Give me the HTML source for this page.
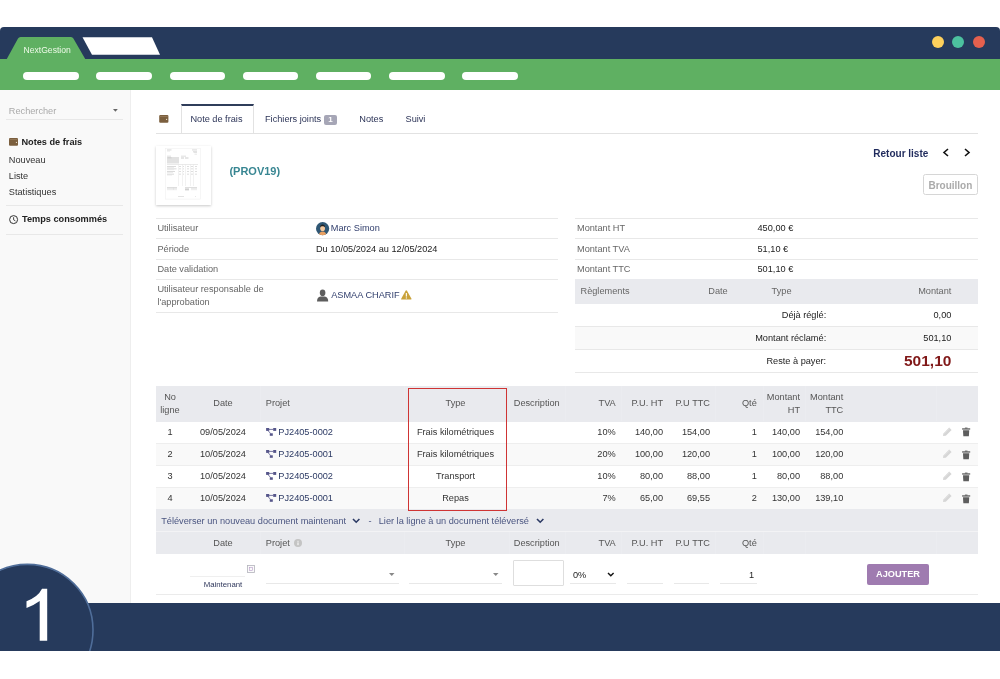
<!DOCTYPE html>
<html><head><meta charset="utf-8">
<style>
*{margin:0;padding:0;box-sizing:border-box}
html,body{width:1000px;height:679px;overflow:hidden;background:#fff}
body{font-family:"Liberation Sans",sans-serif;font-size:9.2px;color:#333;position:relative}
.a{position:absolute;white-space:nowrap;line-height:12px}
.hdr{position:absolute;left:0;top:27px;width:1000px;height:32px;background:#263a5c;border-radius:4px 4px 0 0}
.grn{position:absolute;left:0;top:58.5px;width:1000px;height:31.5px;background:#5fb062}
.pill{position:absolute;top:72px;height:8px;width:55.5px;background:#fff;border-radius:4px}
.dot{position:absolute;top:36.2px;width:12px;height:12px;border-radius:50%}
.side{position:absolute;left:0;top:90px;width:131px;height:513px;background:#f9f9f9;border-right:1px solid #eeeeee}
.ln{position:absolute;height:1px;background:#e8e8e8}
.lbl{color:#666}
.th{position:absolute;background:#e9eaee}
.foot{position:absolute;left:0;top:603px;width:1000px;height:48px;background:#263a5c}
</style></head><body><div style="position:absolute;left:0;top:0;width:1000px;height:679px;will-change:transform">
<!-- header -->
<div class="hdr"></div>
<svg class="a" style="left:0;top:0;line-height:0" width="200" height="60">
  <path d="M6.5 59.5 L18 38.5 Q18.8 37 20.5 37 L71 37 Q72.6 37 73.4 38.5 L85.5 59.5 Z" fill="#5fb062"/>
  <path d="M82.5 37.2 L152 37.2 L160 54.8 L92 54.8 Z" fill="#fff"/>
</svg>
<div class="a" style="left:23.5px;top:43.5px;font-size:8.6px;color:#eefae8">NextGestion</div>
<div class="grn"></div>
<div class="pill" style="left:23px"></div>
<div class="pill" style="left:96.2px"></div>
<div class="pill" style="left:169.5px"></div>
<div class="pill" style="left:242.7px"></div>
<div class="pill" style="left:315.9px"></div>
<div class="pill" style="left:389.2px"></div>
<div class="pill" style="left:462.4px"></div>
<div class="dot" style="left:932px;background:#fdd05c"></div>
<div class="dot" style="left:952.2px;background:#4cc19f"></div>
<div class="dot" style="left:973px;background:#e5604e"></div>

<!-- sidebar -->
<div class="side"></div>
<div class="a" style="left:8.8px;top:105px;color:#aaa">Rechercher</div>
<svg class="a" style="left:113.2px;top:109.2px;line-height:0" width="6" height="4"><path d="M0 0 L4.8 0 L2.4 2.8Z" fill="#666"/></svg>
<div class="ln" style="left:5.5px;top:119px;width:117px"></div>
<div class="a" style="left:21.4px;top:135.5px;font-weight:bold;color:#222">Notes de frais</div>
<div class="a" style="left:8.8px;top:153.5px;color:#333">Nouveau</div>
<div class="a" style="left:8.8px;top:169.7px;color:#333">Liste</div>
<div class="a" style="left:8.8px;top:186.3px;color:#333">Statistiques</div>
<div class="ln" style="left:5.5px;top:205px;width:117px"></div>
<div class="a" style="left:22px;top:213.2px;font-weight:bold;color:#222">Temps consommés</div>
<div class="ln" style="left:5.5px;top:234px;width:117px"></div>


<!-- tabs -->
<svg class="a" style="left:159px;top:115px;line-height:0" width="11" height="9"><rect x="0.2" y="0" width="9.2" height="7.8" rx="1.1" fill="#7b5f3e"/><rect x="0.8" y="1.4" width="8" height="0.6" fill="#a08466"/><circle cx="7.6" cy="4.4" r="0.6" fill="#e8dccb"/></svg>
<div class="a" style="left:181px;top:103.5px;width:73px;height:30px;background:#fff;border:1px solid #e2e2e2;border-top:2px solid #2f3d5a;border-bottom:none"></div>
<div class="ln" style="left:155.6px;top:133px;width:822px;background:#e2e2e2"></div>
<div class="a" style="left:190.4px;top:113px;color:#2d3558">Note de frais</div>
<div class="a" style="left:265px;top:113px;color:#2d3558">Fichiers joints</div>
<div class="a" style="left:324px;top:115px;width:13px;height:9.6px;background:#a6a6b6;border-radius:2px;color:#fff;font-size:8px;font-weight:bold;line-height:9.6px;text-align:center">1</div>
<div class="a" style="left:359.3px;top:113px;color:#2d3558">Notes</div>
<div class="a" style="left:405.5px;top:113px;color:#2d3558">Suivi</div>

<!-- thumbnail -->
<div class="a" style="left:156px;top:146px;width:55px;height:59px;background:#fff;box-shadow:0 0.5px 2.5px rgba(0,0,0,0.22)"></div>
<svg class="a" style="left:165.3px;top:148.2px;line-height:0" width="36" height="52">
 <rect x="0.3" y="0.3" width="35" height="50.8" fill="none" stroke="#f0f0f0" stroke-width="0.6"/>
 <rect x="2" y="1.6" width="4.5" height="0.7" fill="#c8c8c8"/><rect x="2" y="2.8" width="3" height="0.5" fill="#d8d8d8"/>
 <rect x="27" y="1.6" width="5" height="0.7" fill="#c8c8c8"/><rect x="28" y="3" width="4" height="0.6" fill="#d0d0d0"/><rect x="28.5" y="4.4" width="3.5" height="0.6" fill="#d0d0d0"/><rect x="29.5" y="5.8" width="2.5" height="0.6" fill="#d8d8d8"/>
 <rect x="2" y="7.8" width="4" height="0.6" fill="#c8c8c8"/>
 <rect x="2" y="9" width="12" height="6.5" fill="#e2e2e2"/><rect x="2.5" y="9.6" width="4" height="0.6" fill="#c0c0c0"/>
 <rect x="16" y="7.8" width="5" height="0.6" fill="#c8c8c8"/><rect x="16" y="9.6" width="3" height="0.8" fill="#c0c0c0"/><rect x="20" y="9.6" width="3.5" height="0.8" fill="#c0c0c0"/>
 <rect x="2" y="16.5" width="31" height="0.5" fill="#d4d4d4"/>
 <rect x="2" y="18" width="9" height="0.6" fill="#c4c4c4"/><rect x="2" y="19" width="7" height="0.5" fill="#dcdcdc"/>
 <rect x="2" y="20.6" width="9.5" height="0.6" fill="#c4c4c4"/><rect x="2" y="21.6" width="7" height="0.5" fill="#dcdcdc"/>
 <rect x="2" y="23.2" width="8" height="0.6" fill="#c4c4c4"/><rect x="2" y="24.2" width="6" height="0.5" fill="#dcdcdc"/>
 <rect x="2" y="25.8" width="7" height="0.6" fill="#c4c4c4"/><rect x="2" y="26.8" width="5" height="0.5" fill="#dcdcdc"/>
 <rect x="14" y="18" width="2" height="0.6" fill="#c8c8c8"/><rect x="18" y="18" width="1" height="0.6" fill="#c8c8c8"/><rect x="22" y="18" width="2" height="0.6" fill="#c8c8c8"/><rect x="26" y="18" width="2" height="0.6" fill="#c8c8c8"/><rect x="30" y="18" width="2" height="0.6" fill="#c8c8c8"/>
 <rect x="14" y="20.6" width="2" height="0.6" fill="#c8c8c8"/><rect x="18" y="20.6" width="1" height="0.6" fill="#c8c8c8"/><rect x="22" y="20.6" width="2" height="0.6" fill="#c8c8c8"/><rect x="26" y="20.6" width="2" height="0.6" fill="#c8c8c8"/><rect x="30" y="20.6" width="2" height="0.6" fill="#c8c8c8"/>
 <rect x="14" y="23.2" width="2" height="0.6" fill="#c8c8c8"/><rect x="18" y="23.2" width="1" height="0.6" fill="#c8c8c8"/><rect x="22" y="23.2" width="2" height="0.6" fill="#c8c8c8"/><rect x="26" y="23.2" width="2" height="0.6" fill="#c8c8c8"/><rect x="30" y="23.2" width="2" height="0.6" fill="#c8c8c8"/>
 <rect x="14" y="25.8" width="2" height="0.6" fill="#c8c8c8"/><rect x="18" y="25.8" width="1" height="0.6" fill="#c8c8c8"/><rect x="22" y="25.8" width="2" height="0.6" fill="#c8c8c8"/><rect x="26" y="25.8" width="2" height="0.6" fill="#c8c8c8"/><rect x="30" y="25.8" width="2" height="0.6" fill="#c8c8c8"/>
 <rect x="13.3" y="16.5" width="0.4" height="21.5" fill="#dedede"/><rect x="17.4" y="16.5" width="0.4" height="21.5" fill="#dedede"/><rect x="20.4" y="16.5" width="0.4" height="21.5" fill="#dedede"/><rect x="25.1" y="16.5" width="0.4" height="21.5" fill="#dedede"/><rect x="28.2" y="16.5" width="0.4" height="21.5" fill="#dedede"/>
 <rect x="2" y="39" width="10" height="0.6" fill="#c8c8c8"/><rect x="2" y="40.4" width="10" height="0.5" fill="#d4d4d4"/><rect x="2" y="41.6" width="10" height="0.5" fill="#d4d4d4"/><rect x="8" y="39" width="0.4" height="3" fill="#d8d8d8"/>
 <rect x="20" y="39" width="12" height="0.6" fill="#c8c8c8"/><rect x="20" y="40.4" width="4" height="2" fill="#d0d0d0"/><rect x="26" y="40.4" width="6" height="0.5" fill="#d4d4d4"/><rect x="26" y="41.6" width="6" height="0.5" fill="#d4d4d4"/>
 <rect x="13" y="48.3" width="6" height="0.6" fill="#d0d0d0"/><rect x="30" y="48.3" width="1" height="0.6" fill="#d8d8d8"/>
</svg>
<div class="a" style="left:229.4px;top:164.5px;font-size:11px;line-height:13px;font-weight:bold;color:#388692">(PROV19)</div>

<!-- Retour -->
<div class="a" style="left:873.3px;top:148px;font-size:10px;font-weight:bold;color:#1f2a5c">Retour liste</div>
<svg class="a" style="left:942px;top:147.8px;line-height:0" width="30" height="9"><path d="M6 1 L2 4.5 L6 8" fill="none" stroke="#111" stroke-width="1.6"/><path d="M23 1 L27 4.5 L23 8" fill="none" stroke="#111" stroke-width="1.6"/></svg>
<div class="a" style="left:923.2px;top:174.2px;width:54.4px;height:21.3px;border:1px solid #d6d6d6;border-radius:2.5px;color:#aaa;font-size:10px;font-weight:bold;line-height:21.5px;text-align:center">Brouillon</div>

<!-- left info -->
<div class="ln" style="left:156px;top:217.5px;width:402px"></div>
<div class="ln" style="left:156px;top:238px;width:402px"></div>
<div class="ln" style="left:156px;top:258.5px;width:402px"></div>
<div class="ln" style="left:156px;top:279px;width:402px"></div>
<div class="ln" style="left:156px;top:312px;width:402px"></div>
<div class="a lbl" style="left:157.4px;top:222.3px">Utilisateur</div>
<div class="a lbl" style="left:157.4px;top:242.8px">Période</div>
<div class="a lbl" style="left:157.4px;top:263.4px">Date validation</div>
<div class="a lbl" style="left:157.4px;top:283.4px">Utilisateur responsable de</div>
<div class="a lbl" style="left:157.4px;top:296px">l'approbation</div>
<svg class="a" style="left:315.6px;top:221.6px;line-height:0" width="14" height="14"><defs><clipPath id="cc"><circle cx="6.6" cy="6.6" r="6.6"/></clipPath></defs><circle cx="6.6" cy="6.6" r="6.6" fill="#2f5774"/><g clip-path="url(#cc)"><path d="M2.5 14 Q3 9.5 6.6 9.5 Q10.2 9.5 10.7 14Z" fill="#e8a062"/><ellipse cx="6.6" cy="6.2" rx="2.4" ry="2.9" fill="#f3c9a0"/><path d="M4 5.5 Q4.2 2.6 6.6 2.6 Q9 2.6 9.2 5.5 Q8 4 6.6 4.2 Q5 4 4 5.5Z" fill="#222"/></g></svg>
<div class="a" style="left:330.8px;top:222px;color:#33406e">Marc Simon</div>
<div class="a" style="left:315.9px;top:242.8px;color:#222">Du 10/05/2024 au 12/05/2024</div>
<svg class="a" style="left:316.5px;top:289.4px;line-height:0" width="12" height="13"><ellipse cx="5.6" cy="3.8" rx="2.8" ry="3.4" fill="#5d5d5d"/><path d="M0 12.5 Q0 8 3.5 7.6 L7.7 7.6 Q11.2 8 11.2 12.5Z" fill="#5d5d5d"/></svg>
<div class="a" style="left:331.2px;top:289.3px;color:#33406e">ASMAA CHARIF</div>
<svg class="a" style="left:400.8px;top:290.2px;line-height:0" width="11" height="10"><path d="M5.3 0.3 Q5.7 0.3 6 0.8 L10.5 8.8 Q10.7 9.6 10 9.6 L0.6 9.6 Q-0.1 9.6 0.2 8.8 L4.6 0.8 Q4.9 0.3 5.3 0.3Z" fill="#c9a23a"/><rect x="4.8" y="3" width="1.1" height="3.6" fill="#fff"/><rect x="4.8" y="7.4" width="1.1" height="1.1" fill="#fff"/></svg>

<!-- right info -->
<div class="ln" style="left:575px;top:217.5px;width:403px"></div>
<div class="ln" style="left:575px;top:238px;width:403px"></div>
<div class="ln" style="left:575px;top:258.5px;width:403px"></div>
<div class="a lbl" style="left:577px;top:222.3px">Montant HT</div>
<div class="a lbl" style="left:577px;top:242.8px">Montant TVA</div>
<div class="a lbl" style="left:577px;top:263.4px">Montant TTC</div>
<div class="a" style="left:757.5px;top:222.3px;color:#222">450,00 €</div>
<div class="a" style="left:757.5px;top:242.8px;color:#222">51,10 €</div>
<div class="a" style="left:757.5px;top:263.4px;color:#222">501,10 €</div>
<div class="th" style="left:575px;top:279px;width:403px;height:25px"></div>
<div class="a lbl" style="left:580.5px;top:285.3px">Règlements</div>
<div class="a lbl" style="left:708.3px;top:285.3px">Date</div>
<div class="a lbl" style="left:771.6px;top:285.3px">Type</div>
<div class="a lbl" style="left:851.4px;top:285.3px;width:100px;text-align:right">Montant</div>
<div class="ln" style="left:575px;top:326px;width:403px"></div>
<div class="a" style="left:575px;top:326.5px;width:403px;height:22.5px;background:#f9f9f9"></div>
<div class="ln" style="left:575px;top:349px;width:403px"></div>
<div class="ln" style="left:575px;top:372px;width:403px"></div>
<div class="a" style="left:626.2px;top:308.6px;width:200px;text-align:right;color:#222">Déjà réglé:</div>
<div class="a" style="left:851.4px;top:308.6px;width:100px;text-align:right;color:#222">0,00</div>
<div class="a" style="left:626.2px;top:331.6px;width:200px;text-align:right;color:#222">Montant réclamé:</div>
<div class="a" style="left:851.4px;top:331.6px;width:100px;text-align:right;color:#222">501,10</div>
<div class="a" style="left:626.2px;top:354.8px;width:200px;text-align:right;color:#222">Reste à payer:</div>
<div class="a" style="left:851.4px;top:352px;width:100px;text-align:right;color:#801818;font-size:15.5px;line-height:18px;font-weight:bold">501,10</div>

<svg class="a" style="left:8.8px;top:137.6px;line-height:0" width="10" height="9"><rect x="0" y="0" width="9" height="7.8" rx="1.1" fill="#7b5f3e"/><rect x="0.6" y="1.4" width="7.8" height="0.6" fill="#a08466"/><circle cx="7.4" cy="4.4" r="0.6" fill="#e8dccb"/></svg>
<svg class="a" style="left:8.6px;top:214.6px;line-height:0" width="10" height="10"><circle cx="4.6" cy="4.6" r="4" fill="none" stroke="#333" stroke-width="1"/><path d="M4.6 2.2 L4.6 4.8 L6.4 5.9" fill="none" stroke="#333" stroke-width="0.9"/></svg>
<!-- table -->
<div class="th" style="left:155.5px;top:386.2px;width:822px;height:35.6px"></div>
<div class="a" style="left:260px;top:386.3px;width:1px;height:35px;background:#ebecf0"></div>
<div class="a" style="left:404px;top:386.3px;width:1px;height:35px;background:#ebecf0"></div>
<div class="a" style="left:509px;top:386.3px;width:1px;height:35px;background:#ebecf0"></div>
<div class="a" style="left:565px;top:386.3px;width:1px;height:35px;background:#ebecf0"></div>
<div class="a" style="left:621px;top:386.3px;width:1px;height:35px;background:#ebecf0"></div>
<div class="a" style="left:714.5px;top:386.3px;width:1px;height:35px;background:#ebecf0"></div>
<div class="a" style="left:762.5px;top:386.3px;width:1px;height:35px;background:#ebecf0"></div>
<div class="a" style="left:805px;top:386.3px;width:1px;height:35px;background:#ebecf0"></div>
<div class="a" style="left:936px;top:386.3px;width:1px;height:35px;background:#ebecf0"></div>
<div class="a" style="left:110px;top:390.8px;width:120px;text-align:center;color:#555;">No</div>
<div class="a" style="left:110px;top:403.5px;width:120px;text-align:center;color:#555;">ligne</div>
<div class="a" style="left:163px;top:397.1px;width:120px;text-align:center;color:#555;">Date</div>
<div class="a" style="left:265.8px;top:397.1px;color:#555;">Projet</div>
<div class="a" style="left:395.5px;top:397.1px;width:120px;text-align:center;color:#555;">Type</div>
<div class="a" style="left:513.75px;top:397.1px;color:#555;">Description</div>
<div class="a" style="left:495.75px;top:397.1px;width:120px;text-align:right;color:#555;">TVA</div>
<div class="a" style="left:543px;top:397.1px;width:120px;text-align:right;color:#555;">P.U. HT</div>
<div class="a" style="left:590px;top:397.1px;width:120px;text-align:right;color:#555;">P.U TTC</div>
<div class="a" style="left:636.75px;top:397.1px;width:120px;text-align:right;color:#555;">Qté</div>
<div class="a" style="left:680px;top:390.8px;width:120px;text-align:right;color:#555;">Montant</div>
<div class="a" style="left:680px;top:403.5px;width:120px;text-align:right;color:#555;">HT</div>
<div class="a" style="left:723.25px;top:390.8px;width:120px;text-align:right;color:#555;">Montant</div>
<div class="a" style="left:723.25px;top:403.5px;width:120px;text-align:right;color:#555;">TTC</div>
<div class="a" style="left:155.5px;top:421.6px;width:822px;height:21.7px;background:#fff"></div>
<div class="a" style="left:155.5px;top:443.3px;width:822px;height:22.5px;background:#f9f9f9"></div>
<div class="a" style="left:155.5px;top:465.8px;width:822px;height:21.7px;background:#fff"></div>
<div class="a" style="left:155.5px;top:487.5px;width:822px;height:21.5px;background:#f9f9f9"></div>
<div class="ln" style="left:155.5px;top:442.8px;width:822px;background:#eeeeee"></div>
<div class="ln" style="left:155.5px;top:465.2px;width:822px;background:#eeeeee"></div>
<div class="ln" style="left:155.5px;top:487px;width:822px;background:#eeeeee"></div>
<div class="a" style="left:110px;top:426px;width:120px;text-align:center;color:#333;">1</div>
<div class="a" style="left:163px;top:426px;width:120px;text-align:center;color:#333;">09/05/2024</div>
<svg class="a" style="left:265.8px;top:427.8px;line-height:0" width="11" height="9"><rect x="0.1" y="0" width="3.1" height="2.9" fill="#56568a"/><rect x="7.2" y="0" width="3" height="2.9" fill="#56568a"/><rect x="3.8" y="5.3" width="3" height="2.5" fill="#56568a"/><path d="M3 1.4 L7.3 1.4 M2.2 2.8 L4.6 5.5" stroke="#56568a" stroke-width="0.8"/></svg>
<div class="a" style="left:278.3px;top:426px;color:#2c3a64;">PJ2405-0002</div>
<div class="a" style="left:395.5px;top:426px;width:120px;text-align:center;color:#333;">Frais kilométriques</div>
<div class="a" style="left:495.75px;top:426px;width:120px;text-align:right;color:#333;">10%</div>
<div class="a" style="left:543px;top:426px;width:120px;text-align:right;color:#333;">140,00</div>
<div class="a" style="left:590px;top:426px;width:120px;text-align:right;color:#333;">154,00</div>
<div class="a" style="left:636.75px;top:426px;width:120px;text-align:right;color:#333;">1</div>
<div class="a" style="left:680px;top:426px;width:120px;text-align:right;color:#333;">140,00</div>
<div class="a" style="left:723.25px;top:426px;width:120px;text-align:right;color:#333;">154,00</div>
<svg class="a" style="left:942.3px;top:427px;line-height:0" width="11" height="10"><path d="M1 9 L1.4 6.4 L7.2 0.6 L9.6 3 L3.8 8.8 Z" fill="#d6d6d6"/><path d="M2.2 6.6 L7.4 1.4" stroke="#eaeaea" stroke-width="0.5"/></svg>
<svg class="a" style="left:961.9px;top:427.4px;line-height:0" width="9" height="10"><rect x="0.1" y="1.3" width="8.1" height="1.3" fill="#5e5e5e"/><rect x="2.9" y="0.6" width="2.6" height="1" fill="#5e5e5e"/><path d="M1 3.2 L7.2 3.2 L6.9 9.3 L1.3 9.3Z" fill="#5e5e5e"/></svg>
<div class="a" style="left:110px;top:448.25px;width:120px;text-align:center;color:#333;">2</div>
<div class="a" style="left:163px;top:448.25px;width:120px;text-align:center;color:#333;">10/05/2024</div>
<svg class="a" style="left:265.8px;top:450.05px;line-height:0" width="11" height="9"><rect x="0.1" y="0" width="3.1" height="2.9" fill="#56568a"/><rect x="7.2" y="0" width="3" height="2.9" fill="#56568a"/><rect x="3.8" y="5.3" width="3" height="2.5" fill="#56568a"/><path d="M3 1.4 L7.3 1.4 M2.2 2.8 L4.6 5.5" stroke="#56568a" stroke-width="0.8"/></svg>
<div class="a" style="left:278.3px;top:448.25px;color:#2c3a64;">PJ2405-0001</div>
<div class="a" style="left:395.5px;top:448.25px;width:120px;text-align:center;color:#333;">Frais kilométriques</div>
<div class="a" style="left:495.75px;top:448.25px;width:120px;text-align:right;color:#333;">20%</div>
<div class="a" style="left:543px;top:448.25px;width:120px;text-align:right;color:#333;">100,00</div>
<div class="a" style="left:590px;top:448.25px;width:120px;text-align:right;color:#333;">120,00</div>
<div class="a" style="left:636.75px;top:448.25px;width:120px;text-align:right;color:#333;">1</div>
<div class="a" style="left:680px;top:448.25px;width:120px;text-align:right;color:#333;">100,00</div>
<div class="a" style="left:723.25px;top:448.25px;width:120px;text-align:right;color:#333;">120,00</div>
<svg class="a" style="left:942.3px;top:449.25px;line-height:0" width="11" height="10"><path d="M1 9 L1.4 6.4 L7.2 0.6 L9.6 3 L3.8 8.8 Z" fill="#d6d6d6"/><path d="M2.2 6.6 L7.4 1.4" stroke="#eaeaea" stroke-width="0.5"/></svg>
<svg class="a" style="left:961.9px;top:449.65px;line-height:0" width="9" height="10"><rect x="0.1" y="1.3" width="8.1" height="1.3" fill="#5e5e5e"/><rect x="2.9" y="0.6" width="2.6" height="1" fill="#5e5e5e"/><path d="M1 3.2 L7.2 3.2 L6.9 9.3 L1.3 9.3Z" fill="#5e5e5e"/></svg>
<div class="a" style="left:110px;top:470.25px;width:120px;text-align:center;color:#333;">3</div>
<div class="a" style="left:163px;top:470.25px;width:120px;text-align:center;color:#333;">10/05/2024</div>
<svg class="a" style="left:265.8px;top:472.05px;line-height:0" width="11" height="9"><rect x="0.1" y="0" width="3.1" height="2.9" fill="#56568a"/><rect x="7.2" y="0" width="3" height="2.9" fill="#56568a"/><rect x="3.8" y="5.3" width="3" height="2.5" fill="#56568a"/><path d="M3 1.4 L7.3 1.4 M2.2 2.8 L4.6 5.5" stroke="#56568a" stroke-width="0.8"/></svg>
<div class="a" style="left:278.3px;top:470.25px;color:#2c3a64;">PJ2405-0002</div>
<div class="a" style="left:395.5px;top:470.25px;width:120px;text-align:center;color:#333;">Transport</div>
<div class="a" style="left:495.75px;top:470.25px;width:120px;text-align:right;color:#333;">10%</div>
<div class="a" style="left:543px;top:470.25px;width:120px;text-align:right;color:#333;">80,00</div>
<div class="a" style="left:590px;top:470.25px;width:120px;text-align:right;color:#333;">88,00</div>
<div class="a" style="left:636.75px;top:470.25px;width:120px;text-align:right;color:#333;">1</div>
<div class="a" style="left:680px;top:470.25px;width:120px;text-align:right;color:#333;">80,00</div>
<div class="a" style="left:723.25px;top:470.25px;width:120px;text-align:right;color:#333;">88,00</div>
<svg class="a" style="left:942.3px;top:471.25px;line-height:0" width="11" height="10"><path d="M1 9 L1.4 6.4 L7.2 0.6 L9.6 3 L3.8 8.8 Z" fill="#d6d6d6"/><path d="M2.2 6.6 L7.4 1.4" stroke="#eaeaea" stroke-width="0.5"/></svg>
<svg class="a" style="left:961.9px;top:471.65px;line-height:0" width="9" height="10"><rect x="0.1" y="1.3" width="8.1" height="1.3" fill="#5e5e5e"/><rect x="2.9" y="0.6" width="2.6" height="1" fill="#5e5e5e"/><path d="M1 3.2 L7.2 3.2 L6.9 9.3 L1.3 9.3Z" fill="#5e5e5e"/></svg>
<div class="a" style="left:110px;top:492.25px;width:120px;text-align:center;color:#333;">4</div>
<div class="a" style="left:163px;top:492.25px;width:120px;text-align:center;color:#333;">10/05/2024</div>
<svg class="a" style="left:265.8px;top:494.05px;line-height:0" width="11" height="9"><rect x="0.1" y="0" width="3.1" height="2.9" fill="#56568a"/><rect x="7.2" y="0" width="3" height="2.9" fill="#56568a"/><rect x="3.8" y="5.3" width="3" height="2.5" fill="#56568a"/><path d="M3 1.4 L7.3 1.4 M2.2 2.8 L4.6 5.5" stroke="#56568a" stroke-width="0.8"/></svg>
<div class="a" style="left:278.3px;top:492.25px;color:#2c3a64;">PJ2405-0001</div>
<div class="a" style="left:395.5px;top:492.25px;width:120px;text-align:center;color:#333;">Repas</div>
<div class="a" style="left:495.75px;top:492.25px;width:120px;text-align:right;color:#333;">7%</div>
<div class="a" style="left:543px;top:492.25px;width:120px;text-align:right;color:#333;">65,00</div>
<div class="a" style="left:590px;top:492.25px;width:120px;text-align:right;color:#333;">69,55</div>
<div class="a" style="left:636.75px;top:492.25px;width:120px;text-align:right;color:#333;">2</div>
<div class="a" style="left:680px;top:492.25px;width:120px;text-align:right;color:#333;">130,00</div>
<div class="a" style="left:723.25px;top:492.25px;width:120px;text-align:right;color:#333;">139,10</div>
<svg class="a" style="left:942.3px;top:493.25px;line-height:0" width="11" height="10"><path d="M1 9 L1.4 6.4 L7.2 0.6 L9.6 3 L3.8 8.8 Z" fill="#d6d6d6"/><path d="M2.2 6.6 L7.4 1.4" stroke="#eaeaea" stroke-width="0.5"/></svg>
<svg class="a" style="left:961.9px;top:493.65px;line-height:0" width="9" height="10"><rect x="0.1" y="1.3" width="8.1" height="1.3" fill="#5e5e5e"/><rect x="2.9" y="0.6" width="2.6" height="1" fill="#5e5e5e"/><path d="M1 3.2 L7.2 3.2 L6.9 9.3 L1.3 9.3Z" fill="#5e5e5e"/></svg>
<div class="a" style="left:408px;top:388px;width:99.2px;height:122.6px;border:1.8px solid #cf3434;z-index:5"></div>
<div class="th" style="left:155.5px;top:509px;width:822px;height:44.75px"></div>
<div class="ln" style="left:155.5px;top:531px;width:822px;background:#f3f3f5"></div>
<div class="a" style="left:161.25px;top:514.5px;color:#4a5580;">Téléverser un nouveau document maintenant</div>
<svg class="a" style="left:352px;top:517.8px;line-height:0" width="9" height="6"><path d="M1 1 L4.2 4.2 L7.4 1" fill="none" stroke="#2c3a64" stroke-width="1.6"/></svg>
<div class="a" style="left:368.5px;top:514.5px;color:#4a5580;">-</div>
<div class="a" style="left:378.75px;top:514.5px;color:#4a5580;">Lier la ligne à un document téléversé</div>
<svg class="a" style="left:535.8px;top:517.8px;line-height:0" width="9" height="6"><path d="M1 1 L4.2 4.2 L7.4 1" fill="none" stroke="#2c3a64" stroke-width="1.6"/></svg>
<div class="a" style="left:260px;top:531.5px;width:1px;height:22px;background:#ebecf0"></div>
<div class="a" style="left:404px;top:531.5px;width:1px;height:22px;background:#ebecf0"></div>
<div class="a" style="left:509px;top:531.5px;width:1px;height:22px;background:#ebecf0"></div>
<div class="a" style="left:565px;top:531.5px;width:1px;height:22px;background:#ebecf0"></div>
<div class="a" style="left:621px;top:531.5px;width:1px;height:22px;background:#ebecf0"></div>
<div class="a" style="left:714.5px;top:531.5px;width:1px;height:22px;background:#ebecf0"></div>
<div class="a" style="left:762.5px;top:531.5px;width:1px;height:22px;background:#ebecf0"></div>
<div class="a" style="left:805px;top:531.5px;width:1px;height:22px;background:#ebecf0"></div>
<div class="a" style="left:936px;top:531.5px;width:1px;height:22px;background:#ebecf0"></div>
<div class="a" style="left:163px;top:537px;width:120px;text-align:center;color:#555;">Date</div>
<div class="a" style="left:265.8px;top:537px;color:#555;">Projet</div>
<svg class="a" style="left:293.6px;top:539px;line-height:0" width="9" height="9"><circle cx="4" cy="4" r="4" fill="#c4c4c4"/><rect x="3.5" y="3.4" width="1" height="2.8" fill="#fff"/><rect x="3.5" y="1.8" width="1" height="1" fill="#fff"/></svg>
<div class="a" style="left:395.5px;top:537px;width:120px;text-align:center;color:#555;">Type</div>
<div class="a" style="left:513.75px;top:537px;color:#555;">Description</div>
<div class="a" style="left:495.75px;top:537px;width:120px;text-align:right;color:#555;">TVA</div>
<div class="a" style="left:543px;top:537px;width:120px;text-align:right;color:#555;">P.U. HT</div>
<div class="a" style="left:590px;top:537px;width:120px;text-align:right;color:#555;">P.U TTC</div>
<div class="a" style="left:636.75px;top:537px;width:120px;text-align:right;color:#555;">Qté</div>
<div class="ln" style="left:155.5px;top:594px;width:822px;background:#ebebeb"></div>
<div class="ln" style="left:190px;top:576px;width:55px;background:#efefef"></div>
<svg class="a" style="left:247px;top:565px;line-height:0" width="8" height="8"><rect x="0.5" y="0.5" width="7" height="7" fill="#fafafa" stroke="#b4b4bc" stroke-width="0.8"/><rect x="2.5" y="2.6" width="3" height="2.8" fill="none" stroke="#b79cc8" stroke-width="0.6"/></svg>
<div class="a" style="left:163px;top:578.5px;width:120px;text-align:center;color:#30385c;font-size:7.8px">Maintenant</div>
<div class="ln" style="left:266.2px;top:582.5px;width:132.5px;background:#e8e8e8"></div>
<svg class="a" style="left:388.5px;top:572.8px;line-height:0" width="6" height="4"><path d="M0 0 L5.5 0 L2.75 3Z" fill="#888"/></svg>
<div class="ln" style="left:408.7px;top:582.5px;width:93.8px;background:#e8e8e8"></div>
<svg class="a" style="left:493px;top:572.8px;line-height:0" width="6" height="4"><path d="M0 0 L5.5 0 L2.75 3Z" fill="#888"/></svg>
<div class="a" style="left:513.2px;top:559.5px;width:50.5px;height:26px;border:1px solid #dedede;border-radius:1px"></div>
<div class="a" style="left:573px;top:569.3px;color:#222;">0%</div>
<svg class="a" style="left:606.5px;top:572.3px;line-height:0" width="8" height="6"><path d="M1 1 L3.8 3.8 L6.6 1" fill="none" stroke="#111" stroke-width="1.4"/></svg>
<div class="ln" style="left:570px;top:583px;width:45.5px;background:#e8e8e8"></div>
<div class="ln" style="left:626.8px;top:583px;width:36.4px;background:#e8e8e8"></div>
<div class="ln" style="left:674px;top:583px;width:35.2px;background:#e8e8e8"></div>
<div class="ln" style="left:720px;top:583px;width:36.8px;background:#e8e8e8"></div>
<div class="a" style="left:634px;top:568.5px;width:120px;text-align:right;color:#222;">1</div>
<div class="a" style="left:866.8px;top:563.8px;width:62.4px;height:21.2px;background:#9f7bb0;border-radius:2px;color:#fff;font-weight:bold;line-height:21.2px;text-align:center">AJOUTER</div>
<!-- footer -->
<div class="foot"></div>
<svg class="a" style="left:0;top:560px;line-height:0" width="100" height="91">
  <circle cx="27.4" cy="70" r="65.6" fill="#263a5c" stroke="#4f6d99" stroke-width="1.6"/>
</svg>
<svg class="a" style="left:0;top:560px;line-height:0" width="100" height="91"><path d="M47.2 28.8 L47.2 80.8 L39.7 80.8 L39.7 41 Q34 45.2 26.5 48 L26.5 41.2 Q38 37 42 28.8 Z" fill="#fff"/></svg>
</div></body></html>
